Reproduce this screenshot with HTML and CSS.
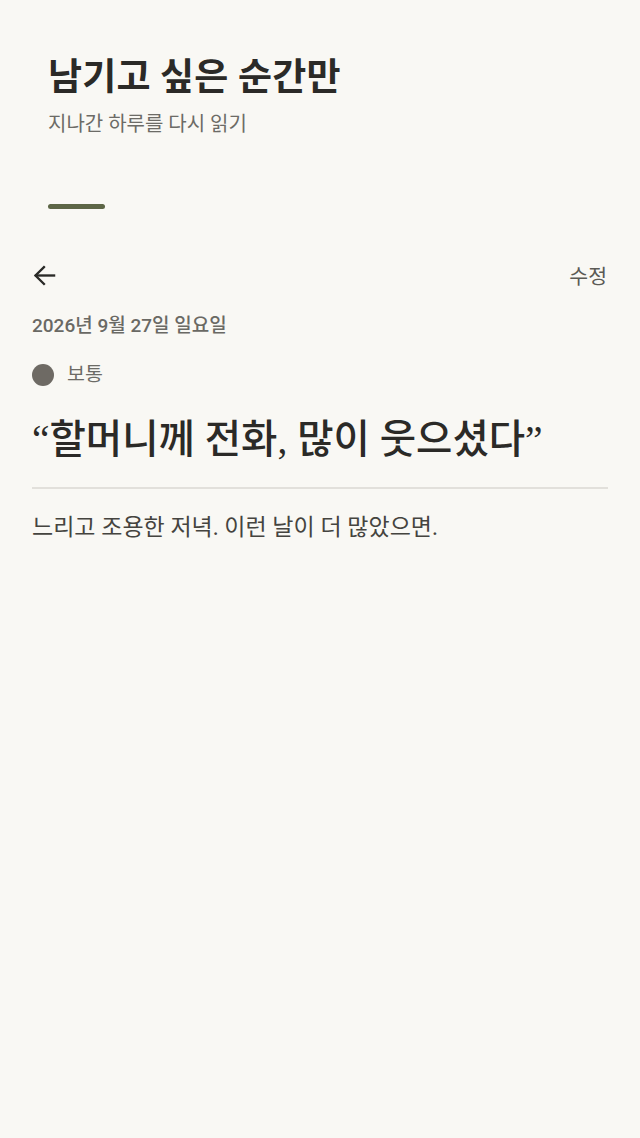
FILE: index.html
```html
<!DOCTYPE html>
<html lang="ko">
<head>
<meta charset="utf-8">
<link rel="stylesheet" href="styles.css">
</head>
<body>
<div class="app">
  <header class="header">
    <h1 class="title">남기고 싶은 순간만</h1>
    <p class="subtitle">지나간 하루를 다시 읽기</p>
    <div class="accent"></div>
  </header>
  <main class="entry">
    <div class="toolbar">
      <button class="back" aria-label="뒤로">
        <svg width="27" height="27" viewBox="0 0 24 24" fill="none" stroke="#2a2a27" stroke-width="2.1" stroke-linecap="square"><path d="M20.5 12H4.5"/><path d="M11.5 4.5 4 12 11.5 19.5"/></svg>
      </button>
      <button class="edit">수정</button>
    </div>
    <div class="date">2026년 9월 27일 일요일</div>
    <div class="mood"><span class="dot"></span><span class="mood-label">보통</span></div>
    <h2 class="headline">“할머니께 전화, 많이 웃으셨다”</h2>
    <hr class="divider">
    <p class="body">느리고 조용한 저녁. 이런 날이 더 많았으면.</p>
  </main>
</div>
</body>
</html>
```
FILE: styles.css
```css
* { box-sizing: border-box; }
html, body { margin: 0; padding: 0; }
body {
  background: #f9f8f4;
  font-family: Roboto, "Noto Sans CJK KR", sans-serif;
  color: #2b2a27;
  width: 640px;
  min-height: 1138px;
}
.header { padding: 53px 48px 0; }
.title {
  margin: 0;
  font-size: 37px;
  font-weight: 700;
  line-height: 50px;
  color: #2b2a27;
  letter-spacing: 0.2px;
}
.subtitle {
  margin: 7px 0 0;
  font-size: 20px;
  line-height: 28px;
  color: #6c6b66;
}
.accent {
  margin-top: 66px;
  width: 57px;
  height: 5px;
  border-radius: 3px;
  background: #5d6646;
}
.entry { padding: 46px 32px 0; }
.toolbar {
  display: flex;
  justify-content: space-between;
  align-items: center;
  height: 40px;
}
.back, .edit {
  background: none;
  border: 0;
  padding: 0;
  cursor: pointer;
  font-family: inherit;
}
.back { display: flex; margin-left: -1px; }
.edit {
  font-size: 20.5px;
  color: #5b5a55;
  margin-right: 1px;
}
.date {
  margin-top: 18px;
  font-size: 19px;
  line-height: 26px;
  color: #6a6964;
  font-weight: 500;
}
.mood {
  display: flex;
  align-items: center;
  gap: 13px;
  margin-top: 23px;
  height: 26px;
}
.dot {
  width: 22px;
  height: 22px;
  border-radius: 50%;
  background: #6e6a64;
}
.mood-label { font-size: 19.5px; color: #6c6b66; line-height: 26px; }
.headline {
  margin: 24px 0 0;
  font-family: "Liberation Serif", "Noto Sans CJK KR", serif;
  font-size: 39.5px;
  font-weight: 500;
  line-height: 56px;
  color: #2b2a27;
}
.divider {
  margin: 19px 0 0;
  border: 0;
  border-top: 2px solid #e2e0db;
}
.body {
  margin: 23px 0 0;
  font-family: "Liberation Serif", "Noto Sans CJK KR", serif;
  font-size: 23px;
  line-height: 32px;
  color: #45443f;
}
```
